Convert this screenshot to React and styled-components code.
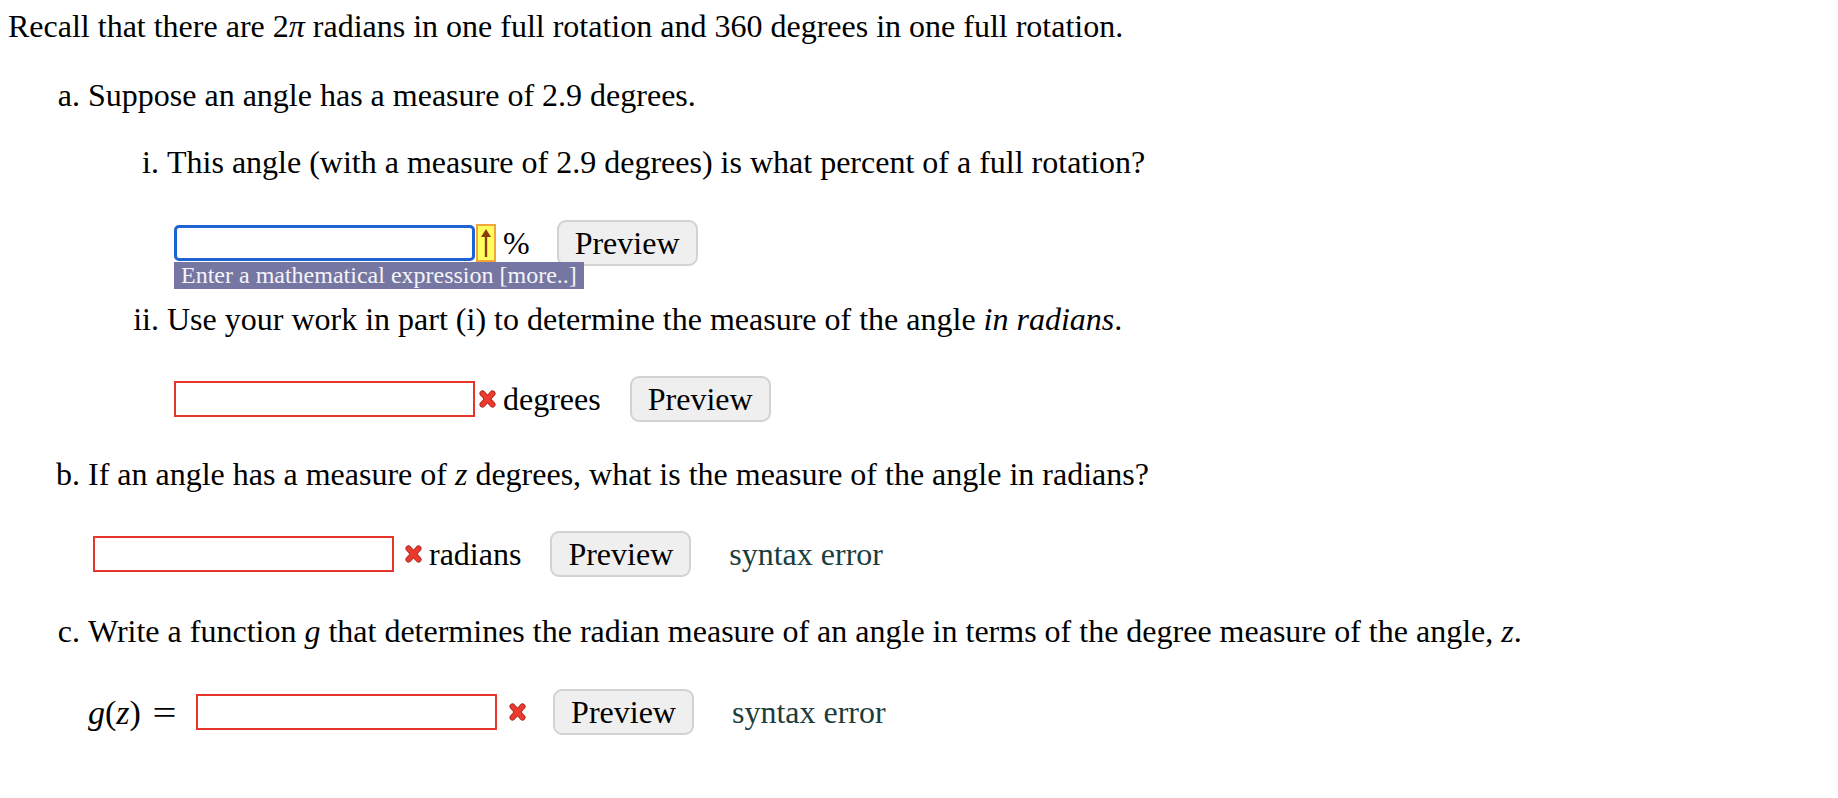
import React from "react"
import styled, { createGlobalStyle } from "styled-components"

const GlobalStyle = createGlobalStyle`
    html, body {
        margin: 0;
        padding: 0;
        background: #ffffff;
    }
    body {
        font-family: "Liberation Serif", "Times New Roman", serif;
        font-size: 32px;
        color: #000000;
    }
`

const Page = styled.div`
    padding: 8px 0 0 8px;
    width: 1830px;
    height: 790px;
`

const Line = styled.div`
    line-height: 37px;
    margin-top: ${(p) => p.$top || 0}px;
    padding-left: ${(p) => p.$indent || 0}px;
    white-space: nowrap;
`

const Marker = styled.span`
    display: inline-block;
    width: ${(p) => p.$width}px;
    text-align: right;
    margin-right: 8px;
`

const Var = styled.i`
    font-family: "Liberation Serif", "Times New Roman", serif;
    font-style: italic;
`

const Row = styled.div`
    display: flex;
    align-items: center;
    height: 46px;
    margin-top: ${(p) => p.$top}px;
    padding-left: ${(p) => p.$indent}px;
`

const Field = styled.div`
    position: relative;
    display: flex;
`

const Input = styled.input`
    box-sizing: border-box;
    width: 301px;
    height: 36px;
    margin: 0;
    padding: 0 6px;
    font: inherit;
    background: #ffffff;
    border: ${(p) => (p.$focus ? "3px solid #1f63d3" : "2px solid #e6352b")};
    border-radius: ${(p) => (p.$focus ? "5px" : "0")};
    outline: none;
`

const Hint = styled.div`
    position: absolute;
    top: calc(100% + 1px);
    left: 0;
    height: 27px;
    line-height: 27px;
    padding: 0 7px;
    background: #7676a2;
    color: #f4f4f8;
    font-size: 24px;
    white-space: nowrap;
`

const ArrowBox = styled.span`
    box-sizing: border-box;
    display: flex;
    align-items: center;
    justify-content: center;
    width: 20px;
    height: 38px;
    margin-left: 1px;
    background: #ffff5e;
    border: 2px solid #f2a53a;
`

const Cross = styled.span`
    display: inline-flex;
    align-items: center;
    margin-left: ${(p) => p.$gap || 6}px;
`

const Unit = styled.span`
    line-height: 37px;
    margin-left: 7px;
`

const PreviewButton = styled.button`
    box-sizing: border-box;
    height: 46px;
    margin-left: ${(p) => p.$gap}px;
    padding: 0 16px;
    font: inherit;
    line-height: 37px;
    color: #000000;
    background: #efefef;
    border: 2px solid #d2d2d2;
    border-radius: 9px;
`

const Feedback = styled.span`
    margin-left: 38px;
    line-height: 37px;
    color: #1b3d3b;
`

const MathLabel = styled.span`
    font-size: 34px;
    line-height: 37px;
    margin-right: 22px;
    white-space: nowrap;
`

const Equals = styled.span`
    display: inline-block;
    margin-left: 14px;
    transform: scaleX(1.25);
`

const CrossIcon = () => (
    <svg width="17" height="18" viewBox="0 0 17 18">
        <g strokeLinecap="round">
            <line x1="3.5" y1="3.5" x2="13.5" y2="14.5" stroke="#a8241c" strokeWidth="6" />
            <line x1="13.5" y1="3.5" x2="3.5" y2="14.5" stroke="#a8241c" strokeWidth="6" />
            <line x1="3.5" y1="3.5" x2="13.5" y2="14.5" stroke="#ec3a2f" strokeWidth="4.4" />
            <line x1="13.5" y1="3.5" x2="3.5" y2="14.5" stroke="#ec3a2f" strokeWidth="4.4" />
        </g>
    </svg>
)

const UpArrow = () => (
    <svg width="12" height="30" viewBox="0 0 12 30">
        <line x1="6" y1="6" x2="6" y2="29" stroke="#8a3b12" strokeWidth="2.4" />
        <path d="M6 1 L11 9 L1 9 Z" fill="#8a3b12" />
    </svg>
)

const Preview = ({ gap }) => <PreviewButton $gap={gap}>Preview</PreviewButton>

const App = () => {
    return (
        <Page>
            <GlobalStyle />
            <Line>
                Recall that there are 2<Var>π</Var> radians in one full rotation and 360 degrees in one full
                rotation.
            </Line>

            <Line $top={32} $indent={40}>
                <Marker $width={32}>a.</Marker>Suppose an angle has a measure of 2.9 degrees.
            </Line>

            <Line $top={30} $indent={119}>
                <Marker $width={32}>i.</Marker>This angle (with a measure of 2.9 degrees) is what percent of a full
                rotation?
            </Line>

            <Row $top={39} $indent={166}>
                <Field>
                    <Input $focus />
                    <Hint>Enter a mathematical expression [more..]</Hint>
                </Field>
                <ArrowBox>
                    <UpArrow />
                </ArrowBox>
                <Unit>%</Unit>
                <Preview gap={27} />
            </Row>

            <Line $top={35} $indent={119}>
                <Marker $width={32}>ii.</Marker>Use your work in part (i) to determine the measure of the angle{" "}
                <Var>in radians</Var>.
            </Line>

            <Row $top={38} $indent={166}>
                <Field>
                    <Input />
                </Field>
                <Cross $gap={4}>
                    <CrossIcon />
                </Cross>
                <Unit>degrees</Unit>
                <Preview gap={29} />
            </Row>

            <Line $top={34} $indent={40}>
                <Marker $width={32}>b.</Marker>If an angle has a measure of <Var>z</Var> degrees, what is the
                measure of the angle in radians?
            </Line>

            <Row $top={38} $indent={85}>
                <Field>
                    <Input />
                </Field>
                <Cross $gap={11}>
                    <CrossIcon />
                </Cross>
                <Unit>radians</Unit>
                <Preview gap={29} />
                <Feedback>syntax error</Feedback>
            </Row>

            <Line $top={36} $indent={40}>
                <Marker $width={32}>c.</Marker>Write a function <Var>g</Var> that determines the radian measure of
                an angle in terms of the degree measure of the angle, <Var>z</Var>.
            </Line>

            <Row $top={39} $indent={80}>
                <MathLabel>
                    <Var>g</Var>(<Var>z</Var>)<Equals>=</Equals>
                </MathLabel>
                <Field>
                    <Input />
                </Field>
                <Cross $gap={12}>
                    <CrossIcon />
                </Cross>
                <Preview gap={27} />
                <Feedback>syntax error</Feedback>
            </Row>
        </Page>
    )
}

export default App
